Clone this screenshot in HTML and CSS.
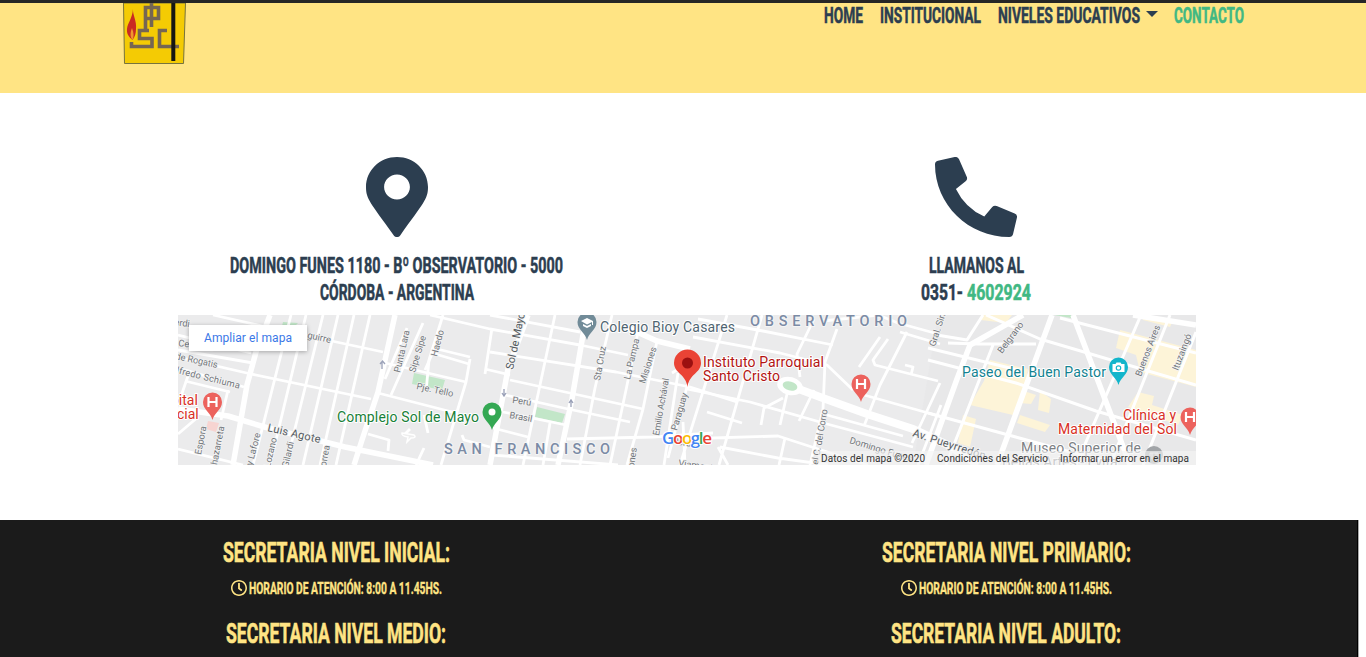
FILE: index.html
```html
<!DOCTYPE html>
<html lang="es">
<head>
<meta charset="utf-8">
<title>Contacto</title>
<link rel="stylesheet" href="styles.css">
</head>
<body>
<header class="header">
  <svg class="logo" width="63" height="61" viewBox="0 0 63 61">
    <path d="M0.500 0H62.500L60.500 60.500H1.500Z" fill="#f4cb04" stroke="#77733c"/>
    <path d="M10 6C9.500 12 14 18 13 26C13 30 12 34 9.500 37C6 34 3.500 31 4 26C4.500 20 9.500 15 10 6Z" fill="#c92b22"/>
    <path d="M9 25C11 30 11 34 9.500 37C7 34 7 30 9 25Z" fill="#f0962f"/>
    <g fill="none" stroke="#756653" stroke-width="3.600">
      <path d="M28.500 0V24M22.500 4.500H35.500V15.500H22.500ZM22.500 15V27.500"/>
      <path d="M26 27.500H16.500V35.500H29V43.500H8.500V39M44 27.500H36.500V43.500H56"/>
    </g>
    <path d="M50.300 0V58" stroke="#151713" stroke-width="4"/>
  </svg>
  <nav class="nav">
    <a><svg class="type" width="39" height="26"><text y="20" textLength="39" lengthAdjust="spacingAndGlyphs">HOME</text></svg></a>
    <a><svg class="type" width="101" height="26"><text y="20" textLength="101" lengthAdjust="spacingAndGlyphs">INSTITUCIONAL</text></svg></a>
    <a class="drop"><svg class="type" width="142" height="26"><text y="20" textLength="142" lengthAdjust="spacingAndGlyphs">NIVELES EDUCATIVOS</text></svg><i class="caret"></i></a>
    <a class="active"><svg class="type" width="70" height="26"><text y="20" textLength="70" lengthAdjust="spacingAndGlyphs">CONTACTO</text></svg></a>
  </nav>
</header>

<main>
  <section class="contact">
    <div class="card">
      <svg class="icon" width="62" height="80" viewBox="0 0 384 512" preserveAspectRatio="none"><path d="M172.268 501.67C26.97 291.031 0 269.413 0 192 0 85.961 85.961 0 192 0s192 85.961 192 192c0 77.413-26.97 99.031-172.268 309.67-9.535 13.774-29.93 13.773-39.464 0zM192 272c44.183 0 80-35.817 80-80s-35.817-80-80-80-80 35.817-80 80 35.817 80 80 80z"/></svg>
      <svg class="type" width="333" height="27"><text y="21" textLength="333" lengthAdjust="spacingAndGlyphs">DOMINGO FUNES 1180 - Bº OBSERVATORIO - 5000</text></svg>
      <svg class="type" width="154" height="27"><text y="21" textLength="154" lengthAdjust="spacingAndGlyphs">CÓRDOBA - ARGENTINA</text></svg>
    </div>
    <div class="card">
      <svg class="icon" width="82" height="80" viewBox="0 0 512 512" preserveAspectRatio="none"><path d="M497.39 361.8l-112-48a24 24 0 0 0-28 6.9l-49.6 60.6A370.66 370.66 0 0 1 130.6 204.11l60.6-49.6a23.94 23.94 0 0 0 6.9-28l-48-112A24.16 24.16 0 0 0 122.6.61l-104 24A24 24 0 0 0 0 48c0 256.5 207.9 464 464 464a24 24 0 0 0 23.4-18.6l24-104a24.29 24.29 0 0 0-14.01-27.6z"/></svg>
      <svg class="type" width="95" height="27"><text y="21" textLength="95" lengthAdjust="spacingAndGlyphs">LLAMANOS AL</text></svg>
      <svg class="type" width="110" height="27"><text y="21" textLength="42" lengthAdjust="spacingAndGlyphs">0351-</text><text class="phone" x="46" y="21" textLength="64" lengthAdjust="spacingAndGlyphs">4602924</text></svg>
    </div>
  </section>

  <svg class="map" width="1018" height="150" viewBox="0 0 1018 150">
    <rect width="1018" height="150" fill="#ebebec"/>
    <path d="M760 0H1018V150H735Z" fill="#e8e8e9"/>
    <g fill="#fdf4d8">
      <path d="M812 45L850 54L846 76L858 80L853 89L842 88L835 100L792 90L800 76L806 66Z"/>
      <path d="M862 76L873 84L871 98L860 95Z"/>
      <path d="M942 15L1018 35V72L962 57L958 40L938 33Z"/>
      <path d="M960 77L976 81L974 90L1005 100L1000 110L950 92Z"/>
      <path d="M785 100L798 104L792 132L780 128ZM842 100L872 110L867 117L839 108ZM805 0L834 0L828 8L803 5ZM965 0L995 5L992 12L965 5Z"/>
    </g>
    <g fill="#c2e6c8">
      <path d="M236 58L267 65L264 75L234 69ZM359 92L387 99L384 108L357 102ZM105 7L120 8L115 13L104 11ZM876 0H893V3Z"/>
    </g>
    <path d="M30 106L41 108L38 117L28 114Z" fill="#f7d4d1"/>
    <g class="streets">
      <path d="M113 0L75 150M128 0L92 150M145 0L108 150M160 0L125 150M176 0L142 150M192 0L158 150M245 8L213 80M229 13L207 64M258 30L247 55M50 75L43 105M12 55L0 90"/>
      <path d="M35 0L93 13L205 37M0 20L73 38M0 35L75 48M0 42L73 59L193 84M0 53L66 72M203 47L288 67M200 78L278 98M7 66L52 77M0 119L20 102M0 134L65 150M190 119L211 125L210 136M246 133L238 150M226 120L232 114M246 100L250 118"/>
      <path d="M265 0L251 45L248 77M292 44L288 67L263 150M314 13L307 59M252 0L312 14L402 30L450 40M312 0L402 17M254 38L291 49M255 33L292 42M312 37L438 57L512 72L559 87M307 54L332 60M332 65L465 94M327 80L390 94L452 107M325 97L388 110M315 113L350 122M389 124L475 122L535 118M284 120L286 125L312 132M314 140L440 150"/>
      <path d="M377 0L362 70L345 150M434 0L417 73L402 150M460 17L448 75L432 150M479 26L465 94L449 150M372 108L365 150M500 58L486 150M494 58L507 50M510 68L490 143"/>
      <path d="M549 0L502 150M584 0L541 150M520 4L585 16L655 30M515 22L602 38L649 50L675 75M509 74L572 87L649 109L735 132M529 97L564 108M502 124L600 121L640 134L690 150M540 132L550 150M542 132L600 143L650 150M636 4L619 39L622 62M659 14L647 47L645 94L632 150M702 22L681 52M710 24L695 45L697 50L760 66M722 17L762 29M729 17L702 70L686 111M727 50L735 52L733 60M686 80L768 103M649 100L725 121M762 68L734 128M763 90L740 150M636 75L621 106M609 79L602 110M605 83L586 93L583 110M645 6L700 0L720 8L760 19M607 123L601 150M505 107L507 150"/>
    </g>
    <g class="streets mid">
      <path d="M963 0L898 150M992 0L932 150M1018 17L965 150M815 30L768 150M808 0L862 24L1018 70M750 45L838 68L918 96L1018 125M882 3L1018 38M750 98L885 135L940 150M805 0L789 25L759 20M770 28L800 29L858 29M750 33L840 55"/>
    </g>
    <g class="streets wide">
      <path d="M92 0L78 37L69 70L55 150M217 0L200 77L184 125L176 150M0 94L50 101L90 113L167 132L255 150M350 0L330 54L312 150M407 8L394 84L380 150M450 13L479 26L512 34"/>
      <path d="M845 0L792 30L779 64L748 150M895 0L952 150M874 0L819 150M1018 10L955 0"/>
    </g>
    <path d="M602 67L642 82L689 99L735 114L770 130L800 150" fill="none" stroke="#fff" stroke-width="8"/>
    <ellipse cx="612" cy="71" rx="13" ry="9" fill="#fff" transform="rotate(15 612 71)"/>
    <ellipse cx="612" cy="71" rx="7.500" ry="4.500" fill="#c2e6c8" transform="rotate(15 612 71)"/>
    <path d="M224 118L236 120Q239 123 233 123L229 127L230 122Q223 121 224 118Z" fill="#eee" stroke="#fff" stroke-width="1.500"/>
    <g class="arrow"><path d="M204 54V47M202 49L204.500 46L207 49M326 74V81M324 78L326 81L328 78M393 92V85M391 88L393 85L395 88"/></g>

    <g class="road">
      <text transform="translate(-4 10) rotate(8)">erdi</text>
      <text transform="translate(0 31) rotate(8)">Ceballos</text>
      <text transform="translate(129 23) rotate(12)">guirre</text>
      <text transform="translate(-3 44) rotate(12)" textLength="43">de Rogatis</text>
      <text transform="translate(-2 58) rotate(14)" textLength="65">lfredo Schiuma</text>
      <text transform="translate(222 58) rotate(-77)" textLength="43">Punta Lara</text>
      <text transform="translate(237 58) rotate(-73)" textLength="38">Sipe Sipe</text>
      <text transform="translate(259 42) rotate(-75)">Haedo</text>
      <text transform="translate(238 74) rotate(12)">Pje. Tello</text>
      <text transform="translate(334 88) rotate(8)">Perú</text>
      <text transform="translate(331 103) rotate(10)">Brasil</text>
      <text transform="translate(23 140) rotate(-79)">Espora</text>
      <text transform="translate(38 155) rotate(-79)">chazarreta</text>
      <text transform="translate(74 151) rotate(-75)">y Lafore</text>
      <text transform="translate(92 153) rotate(-77)">Lozano</text>
      <text transform="translate(110 153) rotate(-77)">Gilardi</text>
      <text transform="translate(147 158) rotate(-80)">Correa</text>
      <text transform="translate(422 66) rotate(-80)">Sta Cruz</text>
      <text transform="translate(452 65) rotate(-77)">La Pampa</text>
      <text transform="translate(467 69) rotate(-72)">Misiones</text>
      <text transform="translate(481 121) rotate(-80)" textLength="58">Emilio Achával</text>
      <text transform="translate(499 116) rotate(-74)">Paraguay</text>
      <text transform="translate(456 153) rotate(-82)">ones</text>
      <text transform="translate(500 151) rotate(8)">Viamonte</text>
      <text transform="translate(494 129) rotate(8)">Perú</text>
      <text transform="translate(640 150) rotate(-80)" textLength="56">el C. del Corro</text>
      <text transform="translate(757 32) rotate(-72)">Gral. Sim</text>
      <text transform="translate(671 128) rotate(17)">Domingo Funes</text>
      <text transform="translate(824 39) rotate(-53)">Belgrano</text>
      <text transform="translate(963 62) rotate(-69)" textLength="54">Buenos Aires</text>
      <text transform="translate(1000 56) rotate(-69)">Ituzaingó</text>
    </g>
    <g class="road major">
      <text transform="translate(89 116) rotate(13)" textLength="54">Luis Agote</text>
      <text transform="translate(335 55) rotate(-78)" textLength="58">Sol de Mayo</text>
      <text transform="translate(734 121) rotate(18)" textLength="76">Av. Pueyrredón</text>
    </g>
    <g class="area">
      <text x="266" y="139" textLength="166">SAN FRANCISCO</text>
      <text x="572" y="11" textLength="157">OBSERVATORIO</text>
    </g>
    <g class="place">
      <text class="slate" x="422" y="17" textLength="135">Colegio Bioy Casares</text>
      <text class="green" x="159" y="107" textLength="142">Complejo Sol de Mayo</text>
      <text class="crimson" x="525" y="52" textLength="121">Instituto Parroquial</text>
      <text class="crimson" x="525" y="66" textLength="77">Santo Cristo</text>
      <text class="red" x="-7" y="90">pital</text>
      <text class="red" x="-1" y="104">cial</text>
      <text class="teal" x="784" y="62" textLength="144">Paseo del Buen Pastor</text>
      <text class="red" x="945" y="105" textLength="53">Clínica y</text>
      <text class="red" x="880" y="119" textLength="119">Maternidad del Sol</text>
      <text class="museum" x="843" y="138" textLength="120">Museo Superior de</text>
      <text class="museum" x="824" y="152">Bellas Artes - Evita</text>
    </g>

    <defs>
      <path id="drop" d="M0 17C-2 9-9.500 7-9.500-1A9.500 9.500 0 0 1 9.500-1C9.500 7 2 9 0 17Z"/>
      <path id="h" d="M-4-6V4M4-6V4M-4-1H4" fill="none" stroke="#fff" stroke-width="2.200"/>
    </defs>
    <g transform="translate(34.500 88)"><use href="#drop" fill="#ec625d"/><use href="#h"/></g>
    <g transform="translate(683 70)"><use href="#drop" fill="#ec625d"/><use href="#h"/></g>
    <g transform="translate(1012 103)"><use href="#drop" fill="#ec625d"/><use href="#h"/></g>
    <g transform="translate(409 8)"><use href="#drop" fill="#718b98"/><path d="M-6-2L0-5L6-2V2H5V-1L0 1.500ZM-4 1L0 3L4 1V3L0 5L-4 3Z" fill="#fff"/></g>
    <g transform="translate(314 98)"><use href="#drop" fill="#34a853"/><circle cy="-1" r="3.500" fill="#fff"/></g>
    <g transform="translate(940.500 53)"><use href="#drop" fill="#12b5cb"/><path d="M-6-4H-3L-2-5.500H2L3-4H6V4H-6Z" fill="#fff"/><circle r="2.200" fill="#fff" stroke="#12b5cb" stroke-width="1.200"/></g>
    <circle cx="976" cy="140" r="9" fill="#a2a5a8"/><path d="M972 141V138H980V141M974 138V144M978 138V144" stroke="#ddd" fill="none"/>
    <path d="M509.500 72C508 59 496 58 496 48A13.500 13.500 0 0 1 523 48C523 58 511 59 509.500 72Z" fill="#ea4335"/><circle cx="509.500" cy="48" r="5.500" fill="#9b1010"/>
    <text class="google" x="484" y="129" textLength="50"><tspan fill="#4285f4">G</tspan><tspan fill="#ea4335">o</tspan><tspan fill="#fbbc05">o</tspan><tspan fill="#4285f4">g</tspan><tspan fill="#34a853">l</tspan><tspan fill="#ea4335">e</tspan></text>
    <rect x="640" y="136" width="378" height="14" fill="#f5f5f5" opacity=".65"/>
    <g class="legal">
      <text x="643" y="147" textLength="104">Datos del mapa ©2020</text>
      <text x="759" y="147" textLength="111">Condiciones del Servicio</text>
      <text x="882" y="147" textLength="129">Informar un error en el mapa</text>
    </g>
    <rect class="expand" x="11" y="10" width="118" height="26"/>
    <text class="link" x="26" y="27" textLength="88">Ampliar el mapa</text>
  </svg>
</main>

<footer class="footer">
  <div class="office">
    <svg class="type title" width="227" height="34"><text y="27" textLength="227" lengthAdjust="spacingAndGlyphs">SECRETARIA NIVEL INICIAL:</text></svg>
    <div class="hours"><svg class="clock" width="16" height="16" viewBox="8 8 496 496"><path d="M256 8C119 8 8 119 8 256s111 248 248 248 248-111 248-248S393 8 256 8zm0 448c-110.500 0-200-89.500-200-200S145.500 56 256 56s200 89.500 200 200-89.500 200-200 200zm61.800-104.400l-84.900-61.700c-3.100-2.300-4.900-5.900-4.900-9.700V116c0-6.600 5.400-12 12-12h32c6.600 0 12 5.400 12 12v141.700l66.800 48.600c5.400 3.900 6.500 11.400 2.600 16.800L334.600 349c-3.900 5.300-11.400 6.500-16.800 2.600z"/></svg><svg class="type small" width="193" height="18"><text y="15" textLength="193" lengthAdjust="spacingAndGlyphs">HORARIO DE ATENCIÓN: 8:00 A 11.45HS.</text></svg></div>
    <svg class="type title" width="220" height="34"><text y="27" textLength="220" lengthAdjust="spacingAndGlyphs">SECRETARIA NIVEL MEDIO:</text></svg>
  </div>
  <div class="office">
    <svg class="type title" width="249" height="34"><text y="27" textLength="249" lengthAdjust="spacingAndGlyphs">SECRETARIA NIVEL PRIMARIO:</text></svg>
    <div class="hours"><svg class="clock" width="16" height="16" viewBox="8 8 496 496"><path d="M256 8C119 8 8 119 8 256s111 248 248 248 248-111 248-248S393 8 256 8zm0 448c-110.500 0-200-89.500-200-200S145.500 56 256 56s200 89.500 200 200-89.500 200-200 200zm61.800-104.400l-84.900-61.700c-3.100-2.300-4.900-5.900-4.900-9.700V116c0-6.600 5.400-12 12-12h32c6.600 0 12 5.400 12 12v141.700l66.800 48.600c5.400 3.900 6.500 11.400 2.600 16.800L334.600 349c-3.900 5.300-11.400 6.500-16.800 2.600z"/></svg><svg class="type small" width="193" height="18"><text y="15" textLength="193" lengthAdjust="spacingAndGlyphs">HORARIO DE ATENCIÓN: 8:00 A 11.45HS.</text></svg></div>
    <svg class="type title" width="230" height="34"><text y="27" textLength="230" lengthAdjust="spacingAndGlyphs">SECRETARIA NIVEL ADULTO:</text></svg>
  </div>
</footer>
</body>
</html>
```
FILE: styles.css
```css
* { box-sizing: border-box; }
body {
  margin: 0;
  height: 657px;
  overflow: hidden;
  background: #fff;
  color: #2c3e50;
  font-family: Roboto, "Liberation Sans", sans-serif;
}
svg { display: block; flex: none; }

.header {
  display: flex;
  justify-content: space-between;
  align-items: flex-start;
  height: 93px;
  padding: 0 122px 0 123px;
  border-top: 3px solid #262626;
  background: #ffe484;
}
.nav { display: flex; gap: 17px; }
.nav a { display: flex; align-items: center; }
.nav .drop { gap: 6px; }
.nav .active { margin-left: -1px; color: #41b883; }
.caret {
  border: 6px solid transparent;
  border-top-color: currentColor;
  border-bottom: 0;
  margin-bottom: 4px;
}

.type {
  overflow: visible;
  fill: currentColor;
  stroke: currentColor;
  stroke-width: .55px;
  font-size: 22.5px;
  font-weight: 700;
}
.type.title { font-size: 28px; stroke-width: .6px; }
.type.small { font-size: 16px; stroke-width: .35px; }

.contact {
  display: grid;
  grid-template-columns: 579px 580px;
  height: 222px;
  padding: 64px 0 0 107px;
}
.card { display: flex; flex-direction: column; align-items: center; }
.icon { margin-bottom: 15px; fill: currentColor; }
.type .phone { fill: #41b883; stroke: #41b883; }

.map { margin-left: 178px; overflow: hidden; }
.streets { fill: none; stroke: #fff; stroke-width: 2.8; stroke-linejoin: round; }
.streets.mid { stroke-width: 3; }
.streets.wide { stroke-width: 5.5; }
.arrow { fill: none; stroke: #9aa1b8; stroke-width: 1.3; }
.map text { paint-order: stroke; stroke-linejoin: round; }
.road { font-size: 9.3px; fill: #72767b; stroke: #f3f3f3; stroke-width: 1.5px; }
.road.major { font-size: 11px; font-weight: 400; fill: #555b61; stroke-width: 2px; }
.area { font-size: 14.5px; font-weight: 500; fill: #7b8ba5; stroke: #f5f5f5; stroke-width: 2px; }
.place { font-size: 14px; stroke: #fff; stroke-width: 2px; }
.slate { fill: #4f6471; }
.green { fill: #188038; }
.crimson { fill: #b31412; }
.red { fill: #d93025; }
.teal { fill: #128391; }
.museum { fill: #7c8084; }
.google { font-family: "Open Sans", sans-serif; font-size: 17px; font-weight: 600; stroke: #fff; stroke-width: 2px; }
.legal { font-size: 10px; fill: #333; }
.expand { fill: #fff; filter: drop-shadow(0 1px 2px rgba(0, 0, 0, .3)); }
.link { font-size: 12px; fill: #3b78e7; }

.footer {
  display: grid;
  grid-template-columns: 670px 670px;
  width: 1359px;
  height: 137px;
  margin-top: 55px;
  padding: 15px 0 0 1px;
  border-right: 1px solid #aaa;
  background: #1b1b1b;
  box-shadow: inset -1px 0 #000;
  color: #ffe484;
}
.office { display: flex; flex-direction: column; align-items: center; }
.hours { display: flex; align-items: center; gap: 2px; height: 18px; margin: 10px 0 19px; }
.clock { fill: currentColor; }
```
